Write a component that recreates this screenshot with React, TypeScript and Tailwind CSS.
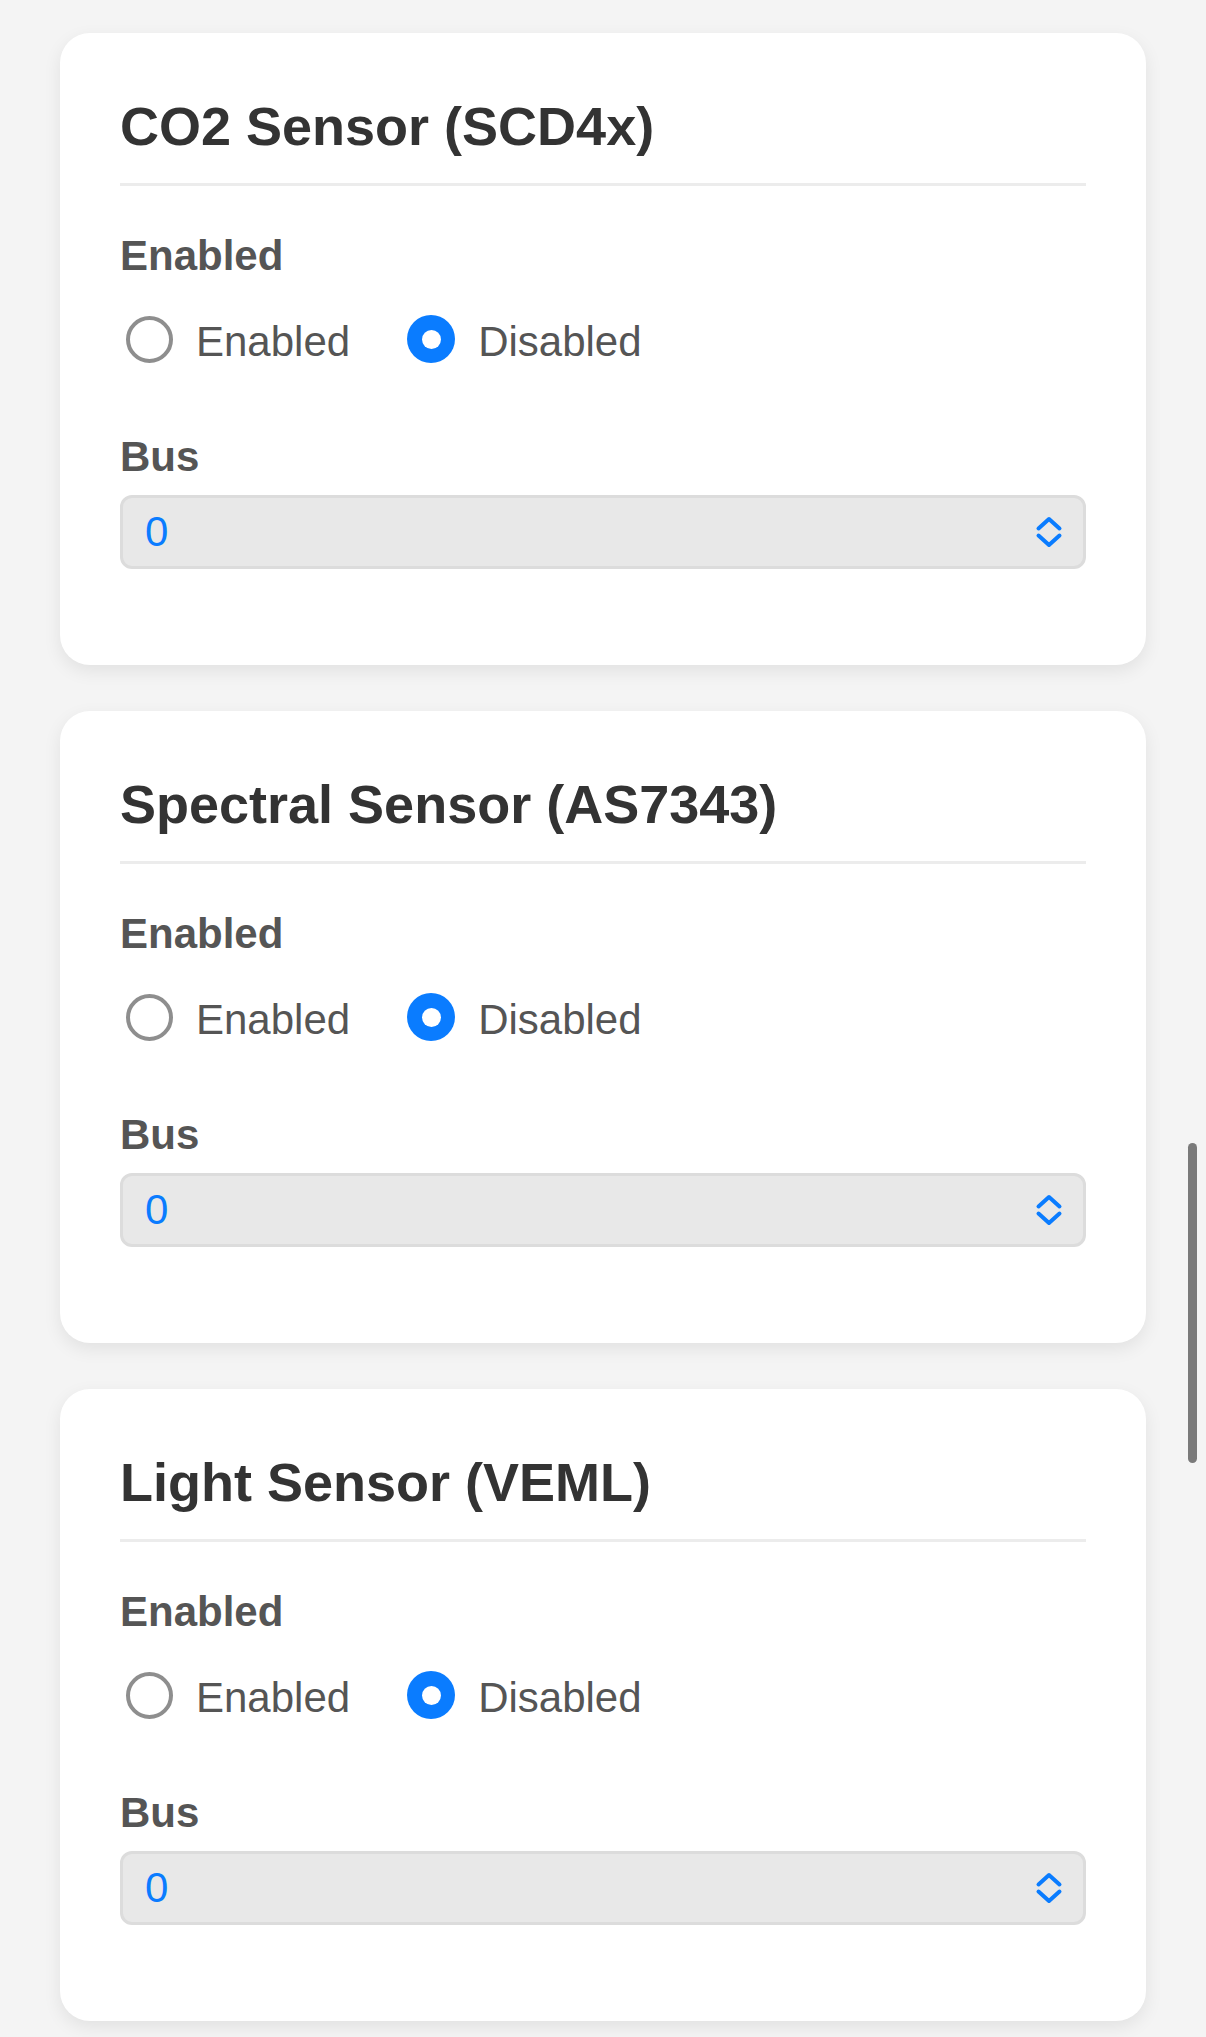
import React from "react";

const sensors = [
  { title: "CO2 Sensor (SCD4x)" },
  { title: "Spectral Sensor (AS7343)" },
  { title: "Light Sensor (VEML)" },
];

function Radio({ checked, label }: { checked: boolean; label: string }) {
  return (
    <label className="flex items-center">
      {checked ? (
        <span className="ml-[6px] -translate-y-[3px] w-[48px] h-[48px] rounded-full bg-[#0a7cff] flex items-center justify-center">
          <span className="w-[19px] h-[19px] rounded-full bg-white" />
        </span>
      ) : (
        <span className="ml-[6px] -translate-y-[3px] w-[47px] h-[47px] rounded-full border-[4px] border-[#8e8e8e] bg-white" />
      )}
      <span className="ml-[23px] text-[42px] leading-[48px] text-[#555]">{label}</span>
    </label>
  );
}

function SensorCard({ title }: { title: string }) {
  return (
    <div className="bg-white rounded-[30px] shadow-[0_6px_18px_rgba(0,0,0,0.08)] px-[60px] pt-[62px] pb-[96px]">
      {/* header */}
      <h2 className="text-[54px] leading-[62px] font-bold text-[#333] pb-[26px] border-b-[3px] border-[#ececec]">
        {title}
      </h2>

      <div className="mt-[46px] text-[42px] leading-[48px] font-bold text-[#555]">Enabled</div>
      <div className="mt-[38px] flex gap-[51px]">
        <Radio checked={false} label="Enabled" />
        <Radio checked={true} label="Disabled" />
      </div>

      <div className="mt-[67px] text-[42px] leading-[48px] font-bold text-[#555]">Bus</div>
      <div className="mt-[14px] h-[74px] rounded-[12px] border-[3px] border-[#dcdcdc] bg-[#e8e8e8] flex items-center justify-between pl-[22px] pr-[20px]">
        <span className="text-[42px] leading-[48px] text-[#0a7cff]">0</span>
        <svg width="28" height="32" viewBox="0 0 28 32" fill="none">
          <polyline points="3.5,12.5 14,3 24.5,12.5" stroke="#0a7cff" strokeWidth="4" strokeLinecap="round" strokeLinejoin="round" />
          <polyline points="3.5,19.5 14,29 24.5,19.5" stroke="#0a7cff" strokeWidth="4" strokeLinecap="round" strokeLinejoin="round" />
        </svg>
      </div>
    </div>
  );
}

export default function App() {
  return (
    <div
      className="relative min-h-screen bg-[#f4f4f4] px-[60px] pt-[33px] pb-[16px] overflow-hidden"
      style={{ fontFamily: '"Liberation Sans", Arial, Helvetica, sans-serif' }}
    >
      <div className="flex flex-col gap-[46px]">
        {sensors.map((s) => (
          <SensorCard key={s.title} title={s.title} />
        ))}
      </div>

      {/* overlay scrollbar */}
      <div className="absolute right-[9px] top-[1143px] w-[9px] h-[320px] rounded-full bg-[#7a7a7a]" />
    </div>
  );
}
